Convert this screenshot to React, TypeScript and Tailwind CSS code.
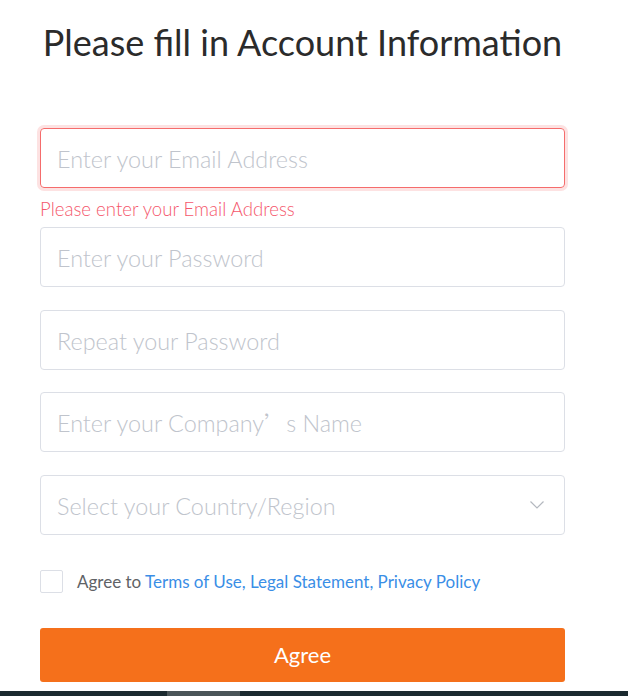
const FIELDS = ["Enter your Password", "Repeat your Password"];

export default function App() {
  return (
    <div className="relative h-[696px] w-[628px] overflow-hidden bg-white font-['Lato',sans-serif]">
      <div className="ml-[40px] w-[525px]">
        {/* Title */}
        <h1 className="pt-[20px] text-center text-[36px] leading-[44px] text-[#2b2b2b]">
          Please fill in Account Information
        </h1>

        {/* Email with error */}
        <div className="mt-[64px] flex h-[60px] items-center rounded-[4px] border border-[#f56c6c] px-[16px] pt-[4px] ring-[3px] ring-[#fde2e2]">
          <span className="text-[23.4px] font-light text-[#c0c4cc]">Enter your Email Address</span>
        </div>
        <p className="mt-[11px] text-[18.6px] font-light leading-[20px] text-[#f5576c]">
          Please enter your Email Address
        </p>

        {/* Other fields */}
        <div className="mt-[8px] flex flex-col gap-[23px]">
          {FIELDS.map((f) => (
            <div
              key={f}
              className="flex h-[60px] items-center rounded-[4px] border border-[#dcdfe6] px-[16px] pt-[4px]"
            >
              <span className="text-[23.4px] font-light text-[#c0c4cc]">{f}</span>
            </div>
          ))}
          <div className="-mt-[1px] flex h-[60px] items-center rounded-[4px] border border-[#dcdfe6] px-[16px] pt-[4px]">
            <span className="text-[23.4px] font-light text-[#c0c4cc]">
              Enter your Company
              <span className="font-['Noto_Sans_CJK_SC',sans-serif] text-[22px]">’</span>s Name
            </span>
          </div>
          <div className="flex h-[60px] items-center justify-between rounded-[4px] border border-[#dcdfe6] px-[16px] pt-[4px]">
            <span className="text-[23.4px] font-light text-[#c0c4cc]">Select your Country/Region</span>
            <svg viewBox="0 0 14 8" className="-mt-[4px] mr-[4px] h-[8px] w-[14px]" fill="none">
              <path d="M0.5 0.5 L7 7 L13.5 0.5" stroke="#b4b8bf" strokeWidth="1.2" />
            </svg>
          </div>
        </div>

        {/* Terms */}
        <div className="mt-[34px] flex items-center gap-[14px]">
          <span className="h-[23px] w-[23px] rounded-[2px] border border-[#dcdfe6]" />
          <p className="text-[17px] text-[#606266]">
            Agree to{" "}
            <span className="text-[#3a8ee6]">Terms of Use, Legal Statement, Privacy Policy</span>
          </p>
        </div>

        {/* Button */}
        <button className="mt-[33px] flex h-[54px] w-full items-center justify-center rounded-[3px] bg-[#f5701b] text-[22px] text-white">
          Agree
        </button>
      </div>

      {/* Bottom bar */}
      <div className="absolute bottom-0 left-0 flex h-[5px] w-full bg-[#1b2a2f]">
        <span className="ml-[167px] h-full w-[73px] bg-[#4a5558]" />
      </div>
    </div>
  );
}
